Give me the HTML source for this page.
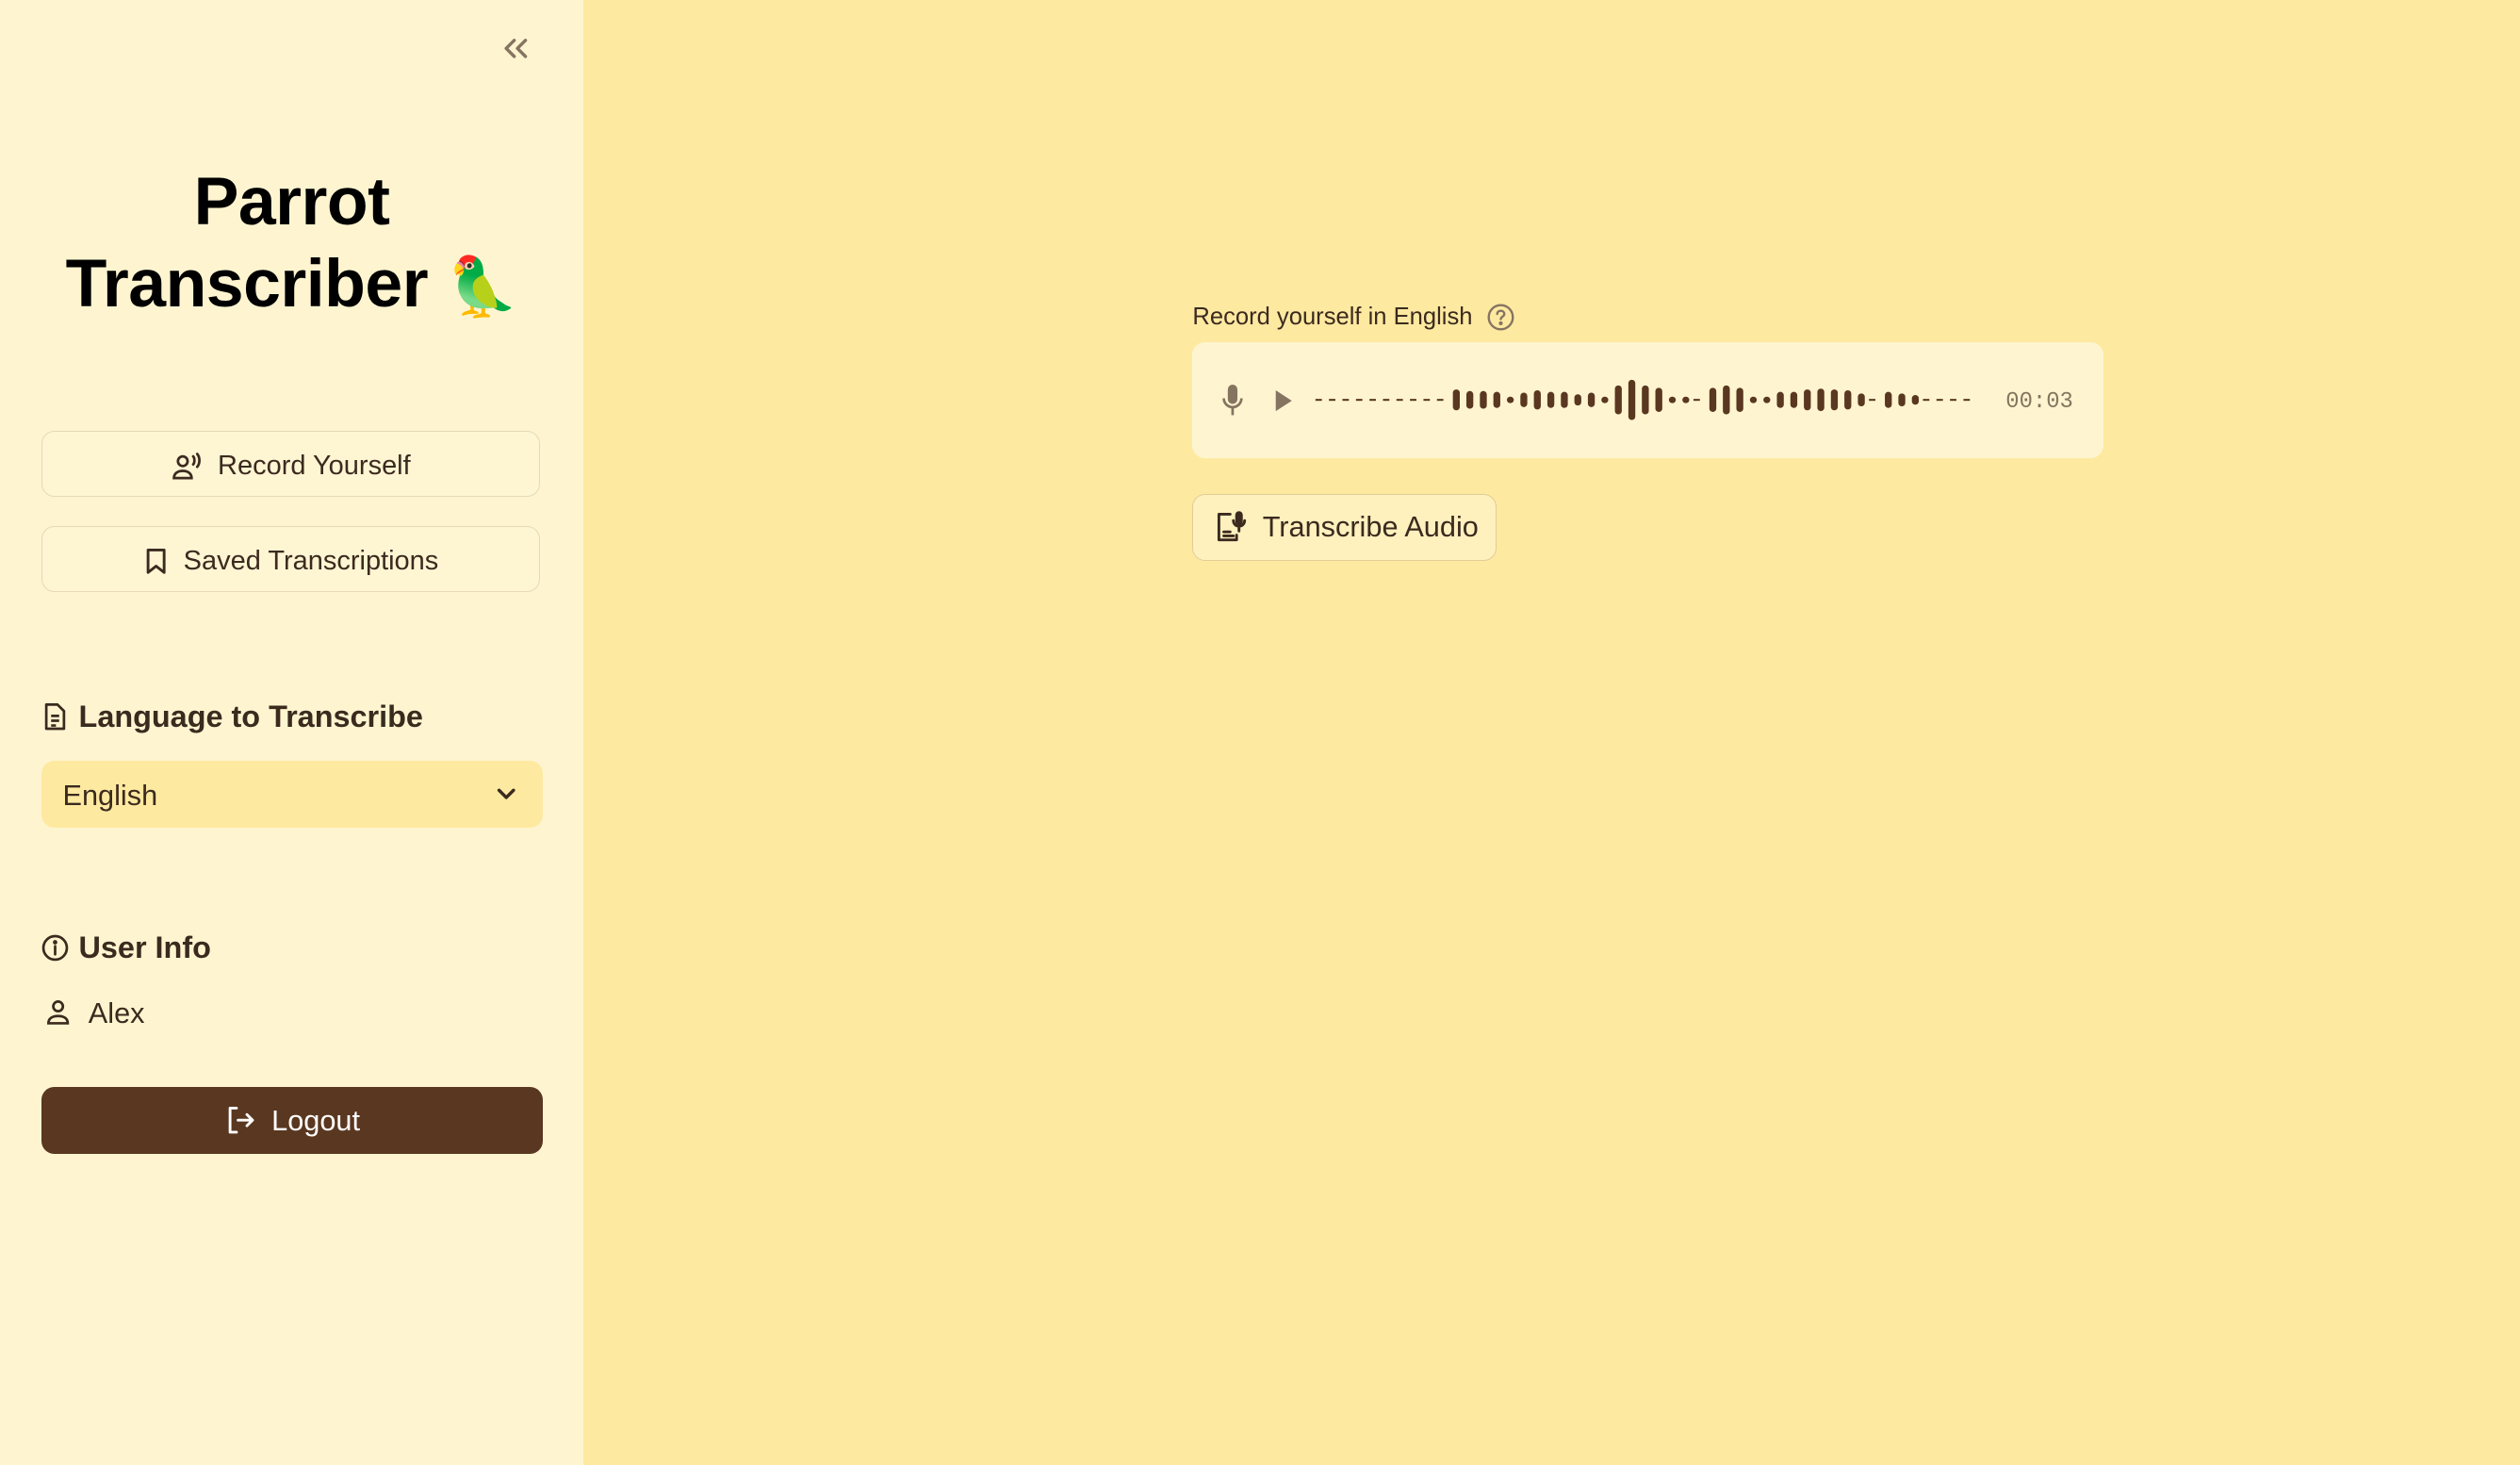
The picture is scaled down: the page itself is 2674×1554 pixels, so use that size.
<!DOCTYPE html>
<html><head><meta charset="utf-8"><style>
html,body{margin:0;padding:0;}
body{width:2674px;height:1553px;overflow:hidden;background:#fee9a1;}
#w{zoom:1.70536;width:1568px;height:911px;position:relative;font-family:"Liberation Sans",sans-serif;color:#3b2a1e;}
#side{position:absolute;left:0;top:0;width:363px;height:911px;background:#fef5d0;}
.abs{position:absolute;}
.btn{position:absolute;left:26px;width:310px;height:41px;padding-top:3px;box-sizing:border-box;border:1px solid #e6d9b4;border-radius:8px;background:#fef5d3;display:flex;align-items:center;justify-content:center;font-size:17px;color:#3b2a1e;gap:9px;}
h1{position:absolute;left:0;width:363px;top:100px;margin:0;text-align:center;font-size:42px;line-height:51px;font-weight:bold;color:#000;letter-spacing:-0.3px;}
.hd{position:absolute;left:26px;font-size:19px;font-weight:bold;display:flex;align-items:center;gap:6px;}
svg{display:block}
#wave{position:absolute;left:818px;top:236px;height:26px;}
</style></head><body><div id="w">
<div id="side">
  <svg class="abs" style="left:312px;top:21px" width="18" height="18" viewBox="0 0 18 18" fill="none" stroke="#857460" stroke-width="2" stroke-linecap="round" stroke-linejoin="round"><path d="M8 4L3 9l5 5M15 4l-5 5 5 5"/></svg>
  <h1>Parrot<br>Transcriber <span style="font-family:'Noto Color Emoji',sans-serif;font-size:36px">🦜</span></h1>
  <div class="btn" style="top:268px"><svg width="20" height="18" viewBox="0 0 20 18" fill="none" stroke="#3b2a1e" stroke-width="1.6" stroke-linecap="round"><circle cx="7" cy="6" r="3"/><path d="M1.5 16.5c0-3 2.5-4.5 5.5-4.5s5.5 1.5 5.5 4.5z"/><path d="M13.5 3c1 1 1 4 0 5M16 1.5c1.8 2 1.8 6 0 8"/></svg>Record Yourself</div>
  <div class="btn" style="top:327px"><svg width="16" height="18" viewBox="0 0 16 18" fill="none" stroke="#3b2a1e" stroke-width="1.7" stroke-linejoin="round"><path d="M3 2h10v14l-5-4-5 4z"/></svg>Saved Transcriptions</div>
  <div class="hd" style="top:435px"><svg width="17" height="19" viewBox="0 0 17 19" fill="none" stroke="#3b2a1e" stroke-width="1.6" stroke-linejoin="round"><path d="M3 2h7l4 4v11H3z"/><path d="M6 9h5M6 12h5M6 15h3"/></svg>Language to Transcribe</div>
  <div class="abs" style="left:26px;top:473px;width:312px;height:42px;background:#fee9a0;border-radius:8px;font-size:18px;display:flex;align-items:center;padding-left:13px;padding-top:2px;box-sizing:border-box">English
    <svg class="abs" style="left:283px;top:16px" width="12" height="10" viewBox="0 0 12 10" fill="none" stroke="#3b2a1e" stroke-width="2" stroke-linecap="round" stroke-linejoin="round"><path d="M1.5 2.5L6 7l4.5-4.5"/></svg></div>
  <div class="hd" style="top:579px"><svg width="17" height="17" viewBox="0 0 17 17" fill="none" stroke="#3b2a1e" stroke-width="1.6"><circle cx="8.5" cy="8.5" r="7.3"/><path d="M8.5 7.5v5" stroke-linecap="round"/><circle cx="8.5" cy="5" r=".6" fill="#3b2a1e"/></svg>User Info</div>
  <svg class="abs" style="left:28px;top:621px" width="16" height="17" viewBox="0 0 16 17" fill="none" stroke="#3b2a1e" stroke-width="1.6"><circle cx="8" cy="5" r="3"/><path d="M2 15.5c0-3 2.5-4.5 6-4.5s6 1.5 6 4.5z"/></svg>
  <div class="abs" style="left:55px;top:620px;font-size:18px">Alex</div>
  <div class="abs" style="left:26px;top:676px;width:312px;height:42px;background:#5a3720;border-radius:8px;color:#fff;font-size:18px;display:flex;align-items:center;justify-content:center;gap:10px"><svg width="19" height="19" viewBox="0 0 19 19" fill="none" stroke="#fff" stroke-width="1.7" stroke-linecap="round" stroke-linejoin="round"><path d="M7 2H3v15h4M8 9.5h9M13.5 6l3.5 3.5-3.5 3.5"/></svg>Logout</div>
</div>
<div class="abs" style="left:742px;top:189px;font-size:15px;display:flex;align-items:center;gap:9px">Record yourself in English <svg width="17" height="17" viewBox="0 0 17 17" fill="none" stroke="#857460" stroke-width="1.4"><circle cx="8.5" cy="8.5" r="7.5"/><path d="M6.3 6.5c0-1.3 1-2 2.2-2s2.2.8 2.2 2c0 1.6-2.2 1.6-2.2 3.2" stroke-linecap="round"/><circle cx="8.5" cy="12.3" r=".5" fill="#857460"/></svg></div>
<div class="abs" style="left:742px;top:213px;width:567px;height:72px;background:#fef5d0;border-radius:8px"></div>
<svg class="abs" style="left:760px;top:239px" width="14" height="20" viewBox="0 0 14 20" fill="#857460"><rect x="4" y="0" width="6" height="12" rx="3"/><path d="M1.5 8.5a5.5 5.5 0 0 0 11 0" fill="none" stroke="#857460" stroke-width="1.6"/><rect x="6.2" y="14" width="1.6" height="5"/></svg>
<svg class="abs" style="left:793px;top:243px" width="12" height="13" viewBox="0 0 12 13" fill="#857460"><path d="M1 0l10 6.5L1 13z"/></svg>
<div id="wave"></div>
<div class="abs" style="left:1248px;top:242px;font-family:'Liberation Mono',monospace;font-size:14px;color:#857460">00:03</div>
<div class="abs" style="left:742px;top:307px;width:189px;height:42px;box-sizing:border-box;border:1px solid #e0cd96;border-radius:8px;background:#fef1be;display:flex;align-items:center;padding-left:14px;gap:9px;font-size:18px"><svg width="20" height="20" viewBox="0 0 20 20" fill="none" stroke="#3b2a1e" stroke-width="1.7" stroke-linecap="round" stroke-linejoin="round"><path d="M9 2H2v16h11v-3"/><path d="M5 13h4M5 15.5h6"/><rect x="13" y="1" width="3" height="7" rx="1.5" fill="#3b2a1e"/><path d="M11 6a3.5 3.5 0 0 0 7 0M14.5 9.5v3"/></svg>Transcribe Audio</div>
</div>
<script>
var h=[0,0,0,0,0,0,0,0,0,0,13,11,11,10,4,9,12,10,10,7,9,4,18,25,18,15,4,4,0,15,18,15,4,4,10,10,13,14,13,12,8,0,10,8,6,0,0,0,0];
var s='';h.forEach(function(v,i){var x=2+i*8.4;if(v===0)s+='<rect x="'+(x-1.5)+'" y="12.4" width="4" height="1.2" fill="#5a3720"/>';else s+='<rect x="'+x+'" y="'+(13-v/2)+'" width="4.3" height="'+v+'" rx="2.1" fill="#5a3720"/>';});
document.getElementById('wave').innerHTML='<svg width="420" height="26">'+s+'</svg>';
</script>
</body></html>
